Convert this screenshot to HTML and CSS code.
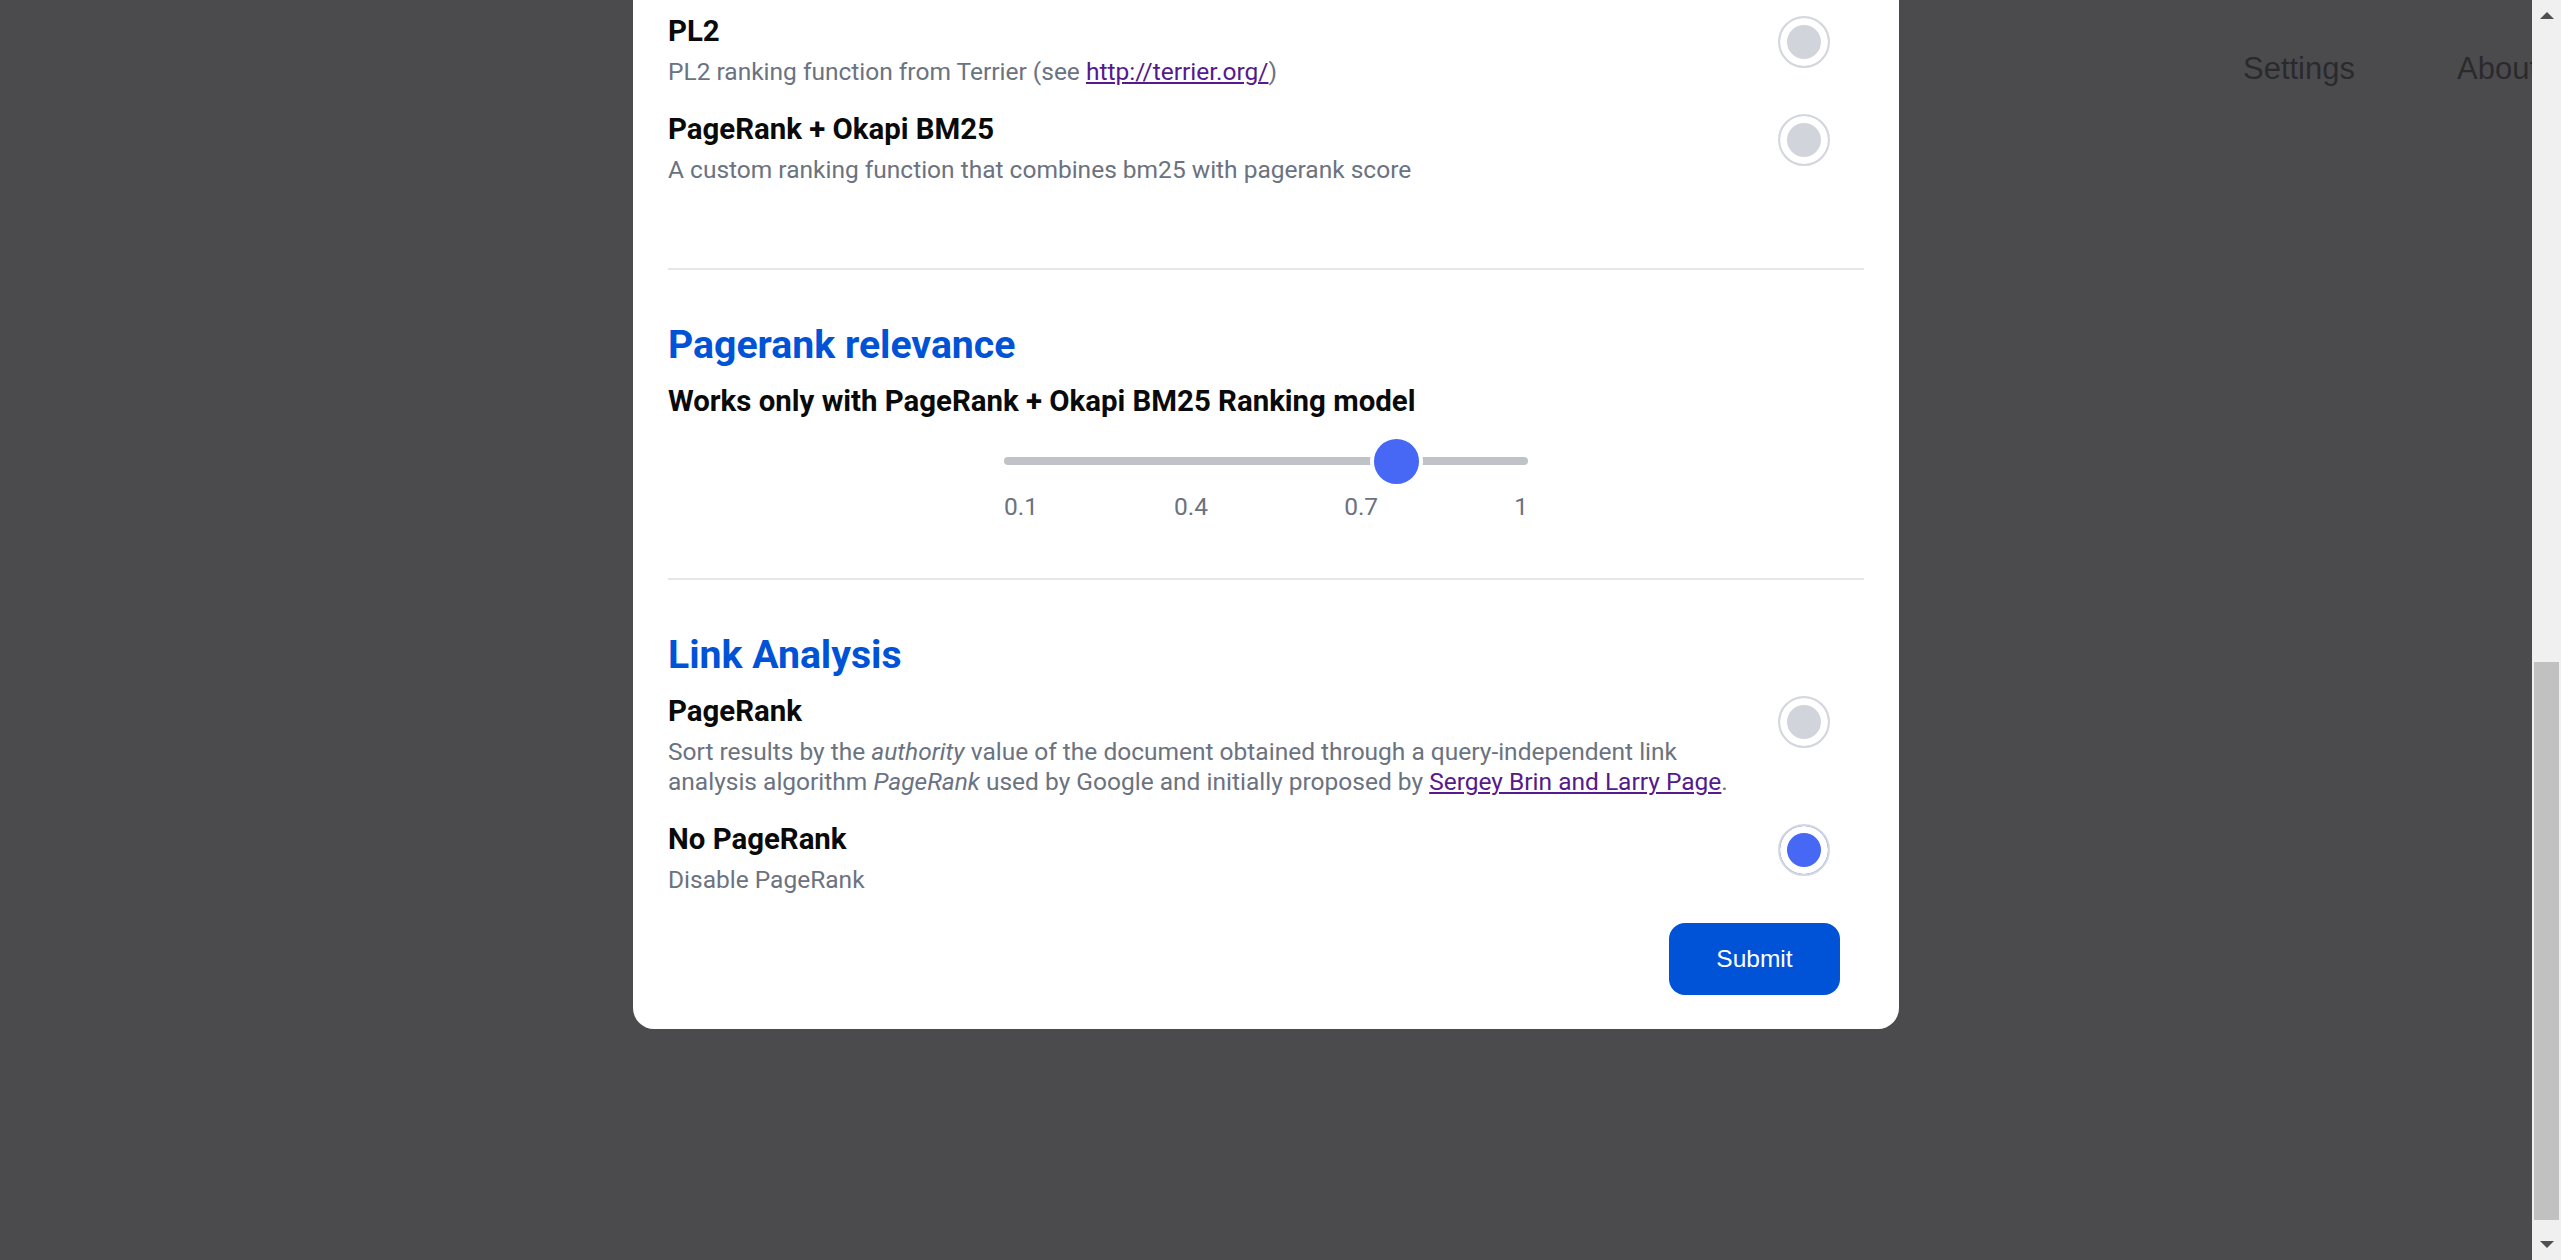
FILE: index.html
```html
<!DOCTYPE html>
<html lang="en">
<head>
<meta charset="utf-8">
<title>Search settings</title>
<link rel="stylesheet" href="styles.css">
</head>
<body>
<header class="site-header">
  <nav class="site-nav">
    <a href="#" class="nav-link">Settings</a>
    <a href="#" class="nav-link">About</a>
  </nav>
</header>

<div class="overlay">
  <div class="overlay-inner">
    <form class="dialog">
      <section class="section">
        <h2 class="section-title">Search settings</h2>
        <p class="dialog-intro">Choose how documents are retrieved and ranked.</p>
      </section>

      <section class="section">
        <h3 class="section-title">Query Expansion</h3>
        <div class="options">
          <label class="option">
            <span class="option-text">
              <span class="option-title">Bo1</span>
              <span class="option-desc">Bose-Einstein 1 query expansion model</span>
            </span>
            <input type="radio" name="qe" value="bo1" class="radio">
          </label>
          <label class="option">
            <span class="option-text">
              <span class="option-title">KL</span>
              <span class="option-desc">Kullback-Leibler divergence query expansion model</span>
            </span>
            <input type="radio" name="qe" value="kl" class="radio">
          </label>
          <label class="option">
            <span class="option-text">
              <span class="option-title">Rocchio</span>
              <span class="option-desc">Rocchio relevance feedback</span>
            </span>
            <input type="radio" name="qe" value="rocchio" class="radio">
          </label>
          <label class="option">
            <span class="option-text">
              <span class="option-title">No Query Expansion</span>
              <span class="option-desc">Disable query expansion</span>
            </span>
            <input type="radio" name="qe" value="none" class="radio" checked>
          </label>
        </div>
      </section>

      <section class="section">
        <h3 class="section-title">Ranking Model</h3>
        <div class="options">
          <label class="option">
            <span class="option-text">
              <span class="option-title">Okapi BM25</span>
              <span class="option-desc">Classic Okapi BM25 probabilistic ranking function</span>
            </span>
            <input type="radio" name="model" value="bm25" class="radio">
          </label>
          <label class="option">
            <span class="option-text">
              <span class="option-title">TF-IDF</span>
              <span class="option-desc">Term frequency, inverse document frequency weighting</span>
            </span>
            <input type="radio" name="model" value="tfidf" class="radio">
          </label>
          <label class="option">
            <span class="option-text">
              <span class="option-title">Dirichlet LM</span>
              <span class="option-desc">Language model with Dirichlet smoothing</span>
            </span>
            <input type="radio" name="model" value="dirichlet" class="radio" checked>
          </label>
          <label class="option">
            <span class="option-text">
              <span class="option-title">DPH</span>
              <span class="option-desc">Hypergeometric DFR model with Popper's normalization</span>
            </span>
            <input type="radio" name="model" value="dph" class="radio">
          </label>
          <label class="option" id="pl2-option">
            <span class="option-text">
              <span class="option-title">PL2</span>
              <span class="option-desc">PL2 ranking function from Terrier (see <a href="http://terrier.org/">http://terrier.org/</a>)</span>
            </span>
            <input type="radio" name="model" value="pl2" class="radio">
          </label>
          <label class="option">
            <span class="option-text">
              <span class="option-title">PageRank + Okapi BM25</span>
              <span class="option-desc">A custom ranking function that combines bm25 with pagerank score</span>
            </span>
            <input type="radio" name="model" value="pagerank-bm25" class="radio">
          </label>
        </div>
      </section>

      <section class="section">
        <h3 class="section-title">Pagerank relevance</h3>
        <p class="section-note">Works only with PageRank + Okapi BM25 Ranking model</p>
        <div class="slider-block">
          <input type="range" class="slider" name="relevance" min="0.1" max="1" step="0.1" value="0.8">
          <div class="slider-labels">
            <span>0.1</span>
            <span>0.4</span>
            <span>0.7</span>
            <span>1</span>
          </div>
        </div>
      </section>

      <section class="section">
        <h3 class="section-title">Link Analysis</h3>
        <div class="options">
          <label class="option">
            <span class="option-text">
              <span class="option-title">PageRank</span>
              <span class="option-desc">Sort results by the <em>authority</em> value of the document obtained through a query-independent link analysis algorithm <em>PageRank</em> used by Google and initially proposed by <a href="#">Sergey Brin and Larry Page</a>.</span>
            </span>
            <input type="radio" name="link" value="pagerank" class="radio">
          </label>
          <label class="option">
            <span class="option-text">
              <span class="option-title">No PageRank</span>
              <span class="option-desc">Disable PageRank</span>
            </span>
            <input type="radio" name="link" value="none" class="radio" checked>
          </label>
        </div>
      </section>

      <div class="dialog-footer">
        <button type="submit" class="submit">Submit</button>
      </div>
    </form>
  </div>
</div>

<div class="scrollbar" aria-hidden="true">
  <span class="scrollbar-button"><span class="arrow arrow-up"></span></span>
  <span class="scrollbar-track"><span class="scrollbar-thumb"></span></span>
  <span class="scrollbar-button"><span class="arrow arrow-down"></span></span>
</div>
<script src="script.js"></script>
</body>
</html>
```

FILE: styles.css
```css
* {
  box-sizing: border-box;
}

html,
body {
  margin: 0;
  height: 100%;
}

body {
  font-family: Roboto, "Noto Sans", Arial, sans-serif;
  background: #ffffff;
  overflow: hidden;
}

/* background page */
.site-header {
  padding: 49px 23px 0 0;
}

.site-nav {
  display: flex;
  justify-content: flex-end;
  gap: 102px;
}

.nav-link {
  font-family: "Liberation Sans", Arial, sans-serif;
  font-size: 31px;
  line-height: 40px;
  color: #333333;
  text-decoration: none;
}

/* modal overlay */
.overlay {
  position: fixed;
  inset: 0;
  overflow-y: auto;
  background: rgba(40, 41, 44, 0.838);
}

.overlay-inner {
  padding: 195px 29px 256px 0;
}

/* scrollbar of the overlay */
.scrollbar {
  position: fixed;
  top: 0;
  right: 0;
  bottom: 0;
  width: 29px;
  display: flex;
  flex-direction: column;
  background: #f0f0f0;
}

.scrollbar-button {
  flex: none;
  height: 29px;
  display: flex;
  align-items: center;
  justify-content: center;
}

.arrow {
  width: 0;
  height: 0;
  border-left: 7px solid transparent;
  border-right: 7px solid transparent;
}

.arrow-up {
  margin-top: 2px;
  border-bottom: 7px solid #505050;
}

.arrow-down {
  margin-top: -2px;
  border-top: 7px solid #505050;
}

.scrollbar-track {
  flex: 1;
  display: block;
}

.scrollbar-thumb {
  display: block;
  height: 558px;
  margin: 633px 2px 0;
  background: #c1c1c1;
}

.dialog {
  width: 1266px;
  margin: 0 auto;
  padding: 35px 35px 34px;
  background: #ffffff;
  border-radius: 21px;
}

/* sections */
.section {
  padding: 51px 0 53px;
}

.section:first-child {
  padding-top: 0;
}

.section + .section {
  border-top: 2px solid #e5e7eb;
}

.section:last-of-type {
  padding-bottom: 0;
}

.section-title {
  margin: 0 0 13.4px;
  font-size: 39.2px;
  line-height: 48px;
  font-weight: 700;
  color: #0053d6;
}

.dialog-intro {
  margin: 8px 0 0;
  font-size: 24.5px;
  line-height: 30px;
  color: #6b7280;
}

.section-note {
  margin: 0 0 16px;
  font-size: 29.4px;
  line-height: 36px;
  font-weight: 700;
  color: #0a0a0a;
}

/* options */
.options {
  display: flex;
  flex-direction: column;
  gap: 23.3px;
  margin-bottom: 30px;
}

.section:last-of-type .options {
  margin-bottom: 0;
}

.option {
  display: flex;
  align-items: flex-start;
  gap: 24px;
  padding-right: 34px;
  cursor: pointer;
}

.option-text {
  flex: 1;
  min-width: 0;
}

.option-title {
  display: block;
  margin-bottom: 8.7px;
  font-size: 29.4px;
  line-height: 36px;
  font-weight: 700;
  color: #0a0a0a;
}

.option-desc {
  display: block;
  font-size: 24.5px;
  line-height: 30px;
  color: #6b7280;
}

.option-desc a {
  color: #551a8b;
}

.radio {
  -webkit-appearance: none;
  appearance: none;
  flex: none;
  width: 52px;
  height: 52px;
  margin: 3px 0 0;
  border: 2px solid #d4d8de;
  border-radius: 50%;
  background: #d1d5db;
  box-shadow: inset 0 0 0 7px #ffffff;
}

.radio:checked {
  background: #4767f5;
}

/* slider */
.slider-block {
  width: 524px;
  margin: 0 auto;
}

.slider {
  -webkit-appearance: none;
  appearance: none;
  display: block;
  width: 524px;
  height: 53px;
  margin: 0;
  padding: 0;
  background: transparent;
}

.slider::-webkit-slider-runnable-track {
  height: 8px;
  border-radius: 4px;
  background: #bfc3c7;
}

.slider::-webkit-slider-thumb {
  -webkit-appearance: none;
  appearance: none;
  width: 53px;
  height: 53px;
  margin-top: -22.5px;
  border: 4px solid #ffffff;
  border-radius: 50%;
  background: #4767f5;
}

.slider-labels {
  display: flex;
  justify-content: space-between;
  margin-top: 1.6px;
  font-size: 24.5px;
  line-height: 36px;
  color: #6b7280;
}

/* footer */
.dialog-footer {
  display: flex;
  justify-content: flex-end;
  padding: 28px 24px 0 0;
}

.submit {
  width: 171px;
  height: 72px;
  border: 0;
  border-radius: 16px;
  background: #0053d6;
  color: #ffffff;
  font-family: "Liberation Sans", Arial, sans-serif;
  font-size: 24.5px;
  cursor: pointer;
}
```

FILE: script.js
```js
(function () {
  var overlay = document.querySelector('.overlay');
  var anchor = document.getElementById('pl2-option');
  if (!overlay || !anchor) return;
  var offset = anchor.getBoundingClientRect().top - overlay.getBoundingClientRect().top;
  overlay.scrollTop = overlay.scrollTop + offset - 12.95;
})();
```
